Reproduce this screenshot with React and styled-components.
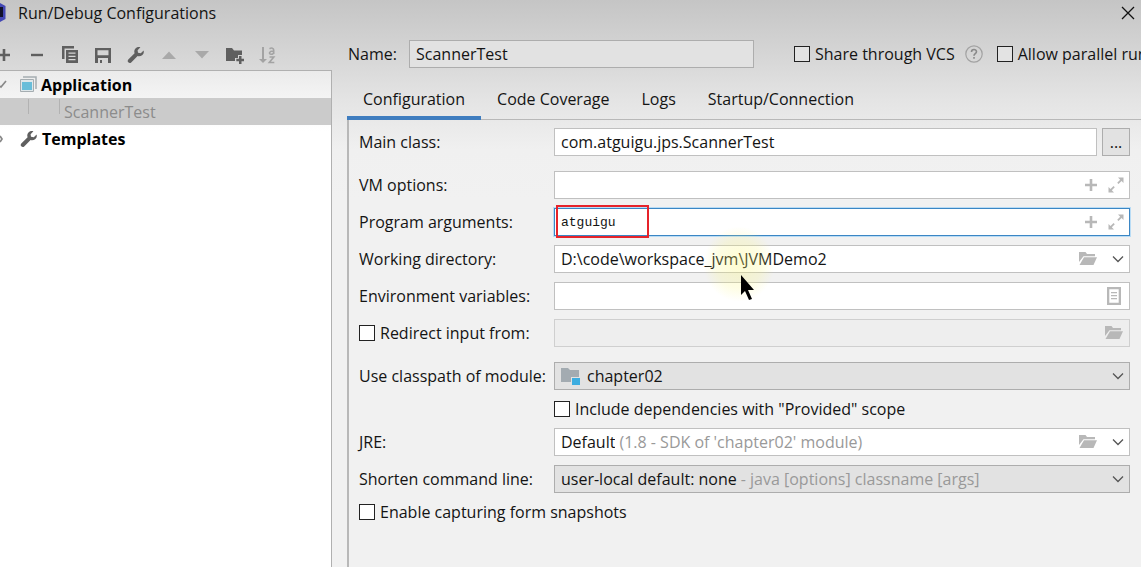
import React from 'react';
import styled, { createGlobalStyle } from 'styled-components';

const Global = createGlobalStyle`
  *, *::before, *::after { box-sizing: border-box; }
  body {
    margin: 0;
    font-family: "Open Sans", "Noto Sans", sans-serif;
    font-size: 16px;
    line-height: 20px;
    color: #141414;
    overflow: hidden;
  }
  button, input, select { font: inherit; color: inherit; margin: 0; }
`;

const Dialog = styled.div`
  min-height: 100vh;
  display: flex;
  flex-direction: column;
  background: linear-gradient(#c5c5c5 0, #d4d4d4 50px, #e4e4e4 100px, #f0f0f0 150px, #f1f1f1 200px);
`;

const TitleBar = styled.header`
  height: 26px;
  display: flex;
  align-items: center;
  gap: 12px;
  padding-right: 4px;
`;

const Title = styled.h1`
  margin: 0;
  flex: 1;
  font-size: 16px;
  font-weight: 400;
`;

const IconButton = styled.button`
  border: 0;
  padding: 0;
  background: none;
  display: flex;
  align-items: center;
  justify-content: center;
  flex: none;
  width: 18px;
  height: 18px;
  color: ${(p) => p.$color || '#5f5f5f'};
`;

const Body = styled.div`
  flex: 1;
  display: flex;
  gap: 15px;
`;

const Sidebar = styled.aside`
  flex: 0 0 332px;
  display: flex;
  flex-direction: column;
`;

const Toolbar = styled.div`
  height: 44px;
  display: flex;
  align-items: center;
  gap: 15px;
  padding-top: 14px;
  margin-left: -5px;
`;

const Tree = styled.ul`
  flex: 1;
  margin: 0;
  padding: 0;
  list-style: none;
  border: 1px solid #b0b0b0;
  border-width: 1px 1px 0 0;
  background: linear-gradient(#ebebeb, #ffffff 60px);
`;

const TreeRow = styled.li`
  height: 27px;
  display: flex;
  align-items: center;
  gap: 4px;
  font-weight: ${(p) => (p.$leaf ? 400 : 700)};
  color: ${(p) => (p.$leaf ? '#8c8c8c' : '#000')};
  background: ${(p) => (p.$leaf ? '#cbcbcb' : 'none')};
`;

const Main = styled.main`
  flex: 1;
  min-width: 0;
  display: flex;
  flex-direction: column;
`;

const NameRow = styled.div`
  display: flex;
  align-items: center;
  height: 56px;
  white-space: nowrap;
  overflow: hidden;
  padding-left: 1px;
`;

const NameLabel = styled.label`
  flex: 0 0 61px;
`;

const NameInput = styled.input`
  flex: 0 0 345px;
  height: 28px;
  padding: 0 6px;
  border: 1px solid #adadad;
  background: #e2e2e2;
  margin-right: 40px;
`;

const CheckLabel = styled.label`
  display: flex;
  align-items: center;
  gap: 5px;
  white-space: nowrap;
  flex: none;
`;

const CheckBox = styled.input.attrs({ type: 'checkbox' })`
  appearance: none;
  width: 16px;
  height: 16px;
  border: 1px solid #222;
  background: ${(p) => (p.$muted ? '#e3e3e3' : '#fff')};
  &:checked { background: #3f7fbf; }
`;

const Help = styled(IconButton)`
  margin: 0 14px 0 10px;
`;

const Tabs = styled.div`
  display: flex;
  height: 38px;
  border-bottom: 1px solid #b8b8b8;
`;

const Tab = styled.button`
  height: 38px;
  padding: 0 16px;
  border: 0;
  border-bottom: 4px solid ${(p) => (p.$active ? '#3f7dbf' : 'transparent')};
  background: none;
  white-space: nowrap;
`;

const Panel = styled.form`
  flex: 1;
  border-left: 2px solid #b8b8b8;
  padding: 8px 11px 8px 10px;
  display: flex;
  flex-direction: column;
  gap: 15px;
`;

const Group = styled.div`
  display: flex;
  flex-direction: column;
  gap: 9px;
`;

const Row = styled.div`
  display: grid;
  grid-template-columns: 195px minmax(0, 1fr);
  align-items: center;
`;

const Line = styled.div`
  display: flex;
  gap: 5px;
`;

const fieldLook = {
  plain: ['#fff', '#c0c0c0'],
  focus: ['#fff', '#3b86c4'],
  disabled: ['#eeeeee', '#cfcfcf'],
  combo: ['#e2e2e2', '#adadad'],
};

const Field = styled.div`
  position: relative;
  flex: 1;
  min-width: 0;
  height: 28px;
  display: flex;
  align-items: center;
  gap: ${(p) => p.$gap || 7}px;
  padding: 0 ${(p) => p.$end || 4}px 0 6px;
  border: 1px solid ${(p) => fieldLook[p.$look || 'plain'][1]};
  background: ${(p) => fieldLook[p.$look || 'plain'][0]};
  box-shadow: ${(p) => (p.$look === 'focus' ? '0 0 0 1px #b9dcf5' : 'none')};
`;

const TextInput = styled.input`
  flex: 1;
  min-width: 0;
  height: 26px;
  padding: 0;
  border: 0;
  outline: 0;
  background: none;
  ${(p) => p.$mono && 'font-family: "Liberation Mono", monospace; font-size: 13px;'}
`;

const Select = styled.select`
  appearance: none;
  field-sizing: content;
  flex: ${(p) => (p.$fill ? 1 : 'none')};
  height: 26px;
  padding: 0;
  border: 0;
  outline: 0;
  background: none;
`;

const Choice = styled.div`
  flex: 1;
  display: flex;
  align-items: center;
  gap: 4px;
`;

const Hint = styled.span`
  color: #999;
  white-space: nowrap;
`;

const MoreButton = styled.button`
  flex: 0 0 28px;
  height: 28px;
  padding: 0;
  border: 1px solid #adadad;
  background: #e2e2e2;
`;

const Marker = styled.div`
  position: absolute;
  left: 1px;
  top: -4px;
  width: 93px;
  height: 33px;
  border: 2px solid #e6232a;
  pointer-events: none;
`;

const Glow = styled.div`
  position: absolute;
  left: 148px;
  top: -20px;
  width: 72px;
  height: 76px;
  border-radius: 50%;
  background: radial-gradient(rgba(250, 246, 120, 0.34), rgba(250, 246, 120, 0.2) 45%, rgba(250, 246, 120, 0) 70%);
  pointer-events: none;
  z-index: 1;
`;

const Pointer = styled.svg`
  position: absolute;
  left: 185px;
  top: 29px;
  z-index: 2;
  pointer-events: none;
`;

const Svg = ({ children }) => (
  <svg width="18" height="18" viewBox="0 0 18 18" fill="currentColor" aria-hidden="true">{children}</svg>
);

const Plus = () => <Svg><path d="M7.700 3h2.600v4.700H15v2.600h-4.700V15H7.700v-4.700H3V7.700h4.700z" /></Svg>;
const Minus = () => <Svg><path d="M3 7.800h12v2.400H3z" /></Svg>;
const Copy = () => (
  <Svg><path d="M1 0h12v2.500H3.500V13H1z" /><path fillRule="evenodd" d="M5 4h12v13H5zM7.500 6.500v1.300h7V6.500zm0 3.200V11h7V9.700zm0 3.200v1.300h7v-1.300z" /></Svg>
);
const Save = () => (
  <Svg><path fillRule="evenodd" d="M1 2h16v15H1zM3.500 4.200v5h11v-5zM4 12v5h2v-3h2v3h6v-5z" /></Svg>
);
const Wrench = () => (
  <Svg><path d="M16.600 4.400 13.800 7.200 11 6.800 10.600 4.200 13.400 1.300C11.400.7 9.400 1.300 8.300 2.700 7.200 4 7 5.700 7.600 7.200L1.300 13.500c-.8.8-.8 2 0 2.800.8.9 2.100.9 2.900.1l6.400-6.300c1.500.5 3.200.2 4.500-.9 1.500-1.200 2.100-3 1.500-4.800z" /></Svg>
);
const Up = () => <Svg><path d="M2 13 9 5.500l7 7.500z" /></Svg>;
const Down = () => <Svg><path d="M2 5h14l-7 7.500z" /></Svg>;
const FolderPlus = () => (
  <Svg><path d="M0 2h6l2 2.500h8V9h-4v3H9v3H0z" /><path d="M13 10h2.500v2.800H18v2.400h-2.500V18H13v-2.800h-2.700v-2.400H13z" /></Svg>
);
const Sort = () => (
  <Svg>
    <path d="M3 1h2v12h3l-4 4-4-4h3z" />
    <path d="M10.500 2.700C12.500 1.500 14.700 2 14.700 4v4M14.700 5c-5-.2-5 3.200-2.600 3.200 1.600 0 2.600-1 2.600-2M10.500 11h4.300l-4.500 5.500h5" fill="none" stroke="currentColor" strokeWidth="1.600" />
  </Svg>
);
const Chevron = () => <Svg><path d="M4 6.500 9 11.500 14 6.500" fill="none" stroke="currentColor" strokeWidth="1.300" /></Svg>;
const Expand = () => (
  <Svg><path d="M11 1.500h5.500V7l-2-2-3 3-1.300-1.300 3-3zM1.500 11l2 2 3-3 1.300 1.300-3 3 2.200 2.200H1.500z" /></Svg>
);
const OpenFolder = () => (
  <Svg><path d="M0 2h6.500l1.500 2h8v2.200H4.500L0 12z" /><path d="M5 7.200h13L14.500 15H.5z" /></Svg>
);
const Doc = () => (
  <Svg><path fillRule="evenodd" d="M2 0h14v18H2zM4.300 2.300v13.400h9.400V2.300z" /><path d="M6 5h6v1.300H6zM6 8h6v1.300H6zM6 11h6v1.300H6z" /></Svg>
);
const Question = () => (
  <Svg><circle cx="9" cy="9" r="8.200" fill="none" stroke="#a2a2a2" strokeWidth="1.200" /><path d="M6.500 7c0-3.200 5-3.200 5-.3 0 1.900-2.500 1.900-2.500 4M9 12v1.700" fill="none" stroke="currentColor" strokeWidth="1.600" /></Svg>
);
const Close = () => <Svg><path d="M3 3 15 15M15 3 3 15" fill="none" stroke="#111" strokeWidth="1.300" /></Svg>;
const AppIcon = () => (
  <svg width="6" height="22" viewBox="0 0 6 22" aria-hidden="true"><path d="M0 1 5.500 4v13L0 20z" fill="#4347b4" /><path d="M0 5h3v10H0z" fill="#11112a" /></svg>
);
const AppType = () => (
  <svg width="17" height="17" viewBox="0 0 17 17" aria-hidden="true"><path d="M3 1h13v12" fill="none" stroke="#a5adb1" strokeWidth="1.500" /><path d="M.5 3.500h13v12H.5z" fill="#dfe7ea" stroke="#a5adb1" /><path d="M2 6h10v8H2z" fill="#68bdd9" /></svg>
);
const ModuleIcon = () => (
  <svg width="19" height="18" viewBox="0 0 19 18" aria-hidden="true"><path d="M0 1h7l2 2h9v12H0z" fill="#a3abb1" /><path d="M10 10h9v8h-9z" fill="#e2e2e2" /><path d="M11 11h8v7h-8z" fill="#3dade0" /></svg>
);
const TreeArrow = ({ d }) => (
  <svg width="16" height="18" viewBox="0 0 16 18" aria-hidden="true"><path d={d} fill="none" stroke="#888" strokeWidth="1.700" /></svg>
);
const IndentGuides = () => (
  <svg width="60" height="27" viewBox="0 0 60 27" aria-hidden="true"><path d="M28.500 1v15M59.500 1v15" stroke="#b2b2b2" /></svg>
);

const tools = [
  ['Add', Plus], ['Remove', Minus], ['Copy', Copy], ['Save', Save], ['Edit templates', Wrench],
  ['Move up', Up, '#a9a9a9'], ['Move down', Down, '#a9a9a9'], ['New folder', FolderPlus], ['Sort', Sort, '#a3a3a3'],
];

const Action = ({ label, icon: Icon, color = '#b8b8b8' }) => (
  <IconButton type="button" aria-label={label} $color={color}><Icon /></IconButton>
);

export default function App() {
  return (
    <Dialog>
      <Global />
      <TitleBar>
        <AppIcon />
        <Title>Run/Debug Configurations</Title>
        <IconButton aria-label="Close"><Close /></IconButton>
      </TitleBar>
      <Body>
        <Sidebar>
          <Toolbar>
            {tools.map(([label, icon, color]) => (
              <Action key={label} label={label} icon={icon} color={color || '#5f5f5f'} />
            ))}
          </Toolbar>
          <Tree>
            <TreeRow><TreeArrow d="M0 10 1 11 6 5" /><AppType />Application</TreeRow>
            <TreeRow $leaf><IndentGuides />ScannerTest</TreeRow>
            <TreeRow>
              <TreeArrow d="M0 6 2 9 0 12" />
              <IconButton as="span"><Wrench /></IconButton>Templates
            </TreeRow>
          </Tree>
        </Sidebar>
        <Main>
          <NameRow>
            <NameLabel htmlFor="name">Name:</NameLabel>
            <NameInput id="name" defaultValue="ScannerTest" />
            <CheckLabel><CheckBox $muted />Share through VCS</CheckLabel>
            <Help type="button" aria-label="Help" $color="#8a8a8a"><Question /></Help>
            <CheckLabel><CheckBox $muted />Allow parallel run</CheckLabel>
          </NameRow>
          <Tabs role="tablist">
            {['Configuration', 'Code Coverage', 'Logs', 'Startup/Connection'].map((t, i) => (
              <Tab key={t} type="button" role="tab" aria-selected={i === 0} $active={i === 0}>{t}</Tab>
            ))}
          </Tabs>
          <Panel>
            <Group>
              <Row>
                <label htmlFor="main">Main class:</label>
                <Line>
                  <Field><TextInput id="main" defaultValue="com.atguigu.jps.ScannerTest" /></Field>
                  <MoreButton type="button" aria-label="Browse main class">...</MoreButton>
                </Line>
              </Row>
            </Group>
            <Group>
              <Row>
                <label htmlFor="vm">VM options:</label>
                <Field>
                  <TextInput id="vm" />
                  <Action label="Insert macro" icon={Plus} /><Action label="Expand" icon={Expand} />
                </Field>
              </Row>
              <Row>
                <label htmlFor="args">Program arguments:</label>
                <Field $look="focus">
                  <TextInput id="args" $mono defaultValue="atguigu" />
                  <Action label="Insert macro" icon={Plus} /><Action label="Expand" icon={Expand} />
                  <Marker />
                </Field>
              </Row>
              <Row>
                <label htmlFor="dir">Working directory:</label>
                <Field $gap={12} $end={2}>
                  <TextInput id="dir" defaultValue="D:\code\workspace_jvm\JVMDemo2" />
                  <Action label="Browse" icon={OpenFolder} /><Action label="Recent directories" icon={Chevron} color="#555" />
                  <Glow />
                  <Pointer width="14" height="26" viewBox="0 0 14 26" aria-hidden="true">
                    <path d="M1 0v20l4-4 4 9 3-1-4-9h6z" fill="#000" />
                  </Pointer>
                </Field>
              </Row>
              <Row>
                <label htmlFor="env">Environment variables:</label>
                <Field $end={6}><TextInput id="env" /><Action label="Edit variables" icon={Doc} /></Field>
              </Row>
              <Row>
                <CheckLabel><CheckBox />Redirect input from:</CheckLabel>
                <Field $look="disabled" $end={6}><TextInput aria-label="Input file" disabled /><Action label="Browse" icon={OpenFolder} /></Field>
              </Row>
            </Group>
            <Group>
              <Row>
                <label htmlFor="module">Use classpath of module:</label>
                <Field $look="combo" $end={2}>
                  <ModuleIcon />
                  <Select id="module" $fill><option>chapter02</option></Select>
                  <Action label="Show modules" icon={Chevron} color="#555" />
                </Field>
              </Row>
              <Row>
                <span />
                <CheckLabel><CheckBox />Include dependencies with "Provided" scope</CheckLabel>
              </Row>
              <Row>
                <label htmlFor="jre">JRE:</label>
                <Field $gap={12} $end={2}>
                  <Choice>
                    <Select id="jre"><option>Default</option></Select>
                    <Hint>(1.8 - SDK of 'chapter02' module)</Hint>
                  </Choice>
                  <Action label="Browse" icon={OpenFolder} /><Action label="Show JREs" icon={Chevron} color="#555" />
                </Field>
              </Row>
              <Row>
                <label htmlFor="shorten">Shorten command line:</label>
                <Field $look="combo" $end={2}>
                  <Choice>
                    <Select id="shorten"><option>user-local default: none</option></Select>
                    <Hint>- java [options] classname [args]</Hint>
                  </Choice>
                  <Action label="Show options" icon={Chevron} color="#555" />
                </Field>
              </Row>
              <CheckLabel><CheckBox />Enable capturing form snapshots</CheckLabel>
            </Group>
          </Panel>
        </Main>
      </Body>
    </Dialog>
  );
}
